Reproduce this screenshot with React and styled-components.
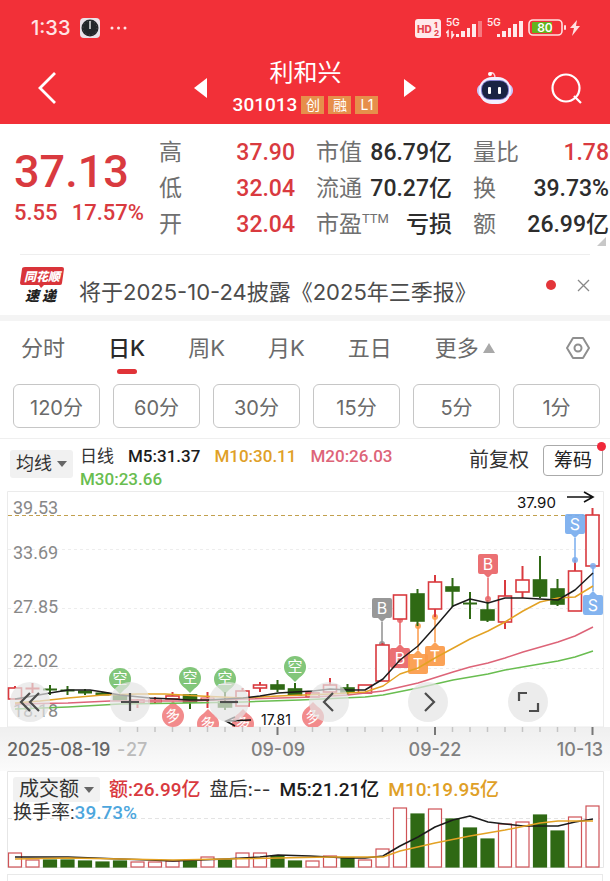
import styled, { createGlobalStyle } from "styled-components";

const RED = "#d93a3f";
const GREEN = "#2f6914";

// candle: [kind, high, top, bottom, low], kind is "r" (up) or "g" (down)
const candles = [
  ["r", 686, 688, 699, 699],
  ["r", 683, 688, 689, 693],
  ["g", 685, 689, 690, 695],
  ["g", 686, 690, 691, 695],
  ["g", 689, 691, 693, 695],
  ["g", 692, 693, 695, 695],
  ["g", 695, 695, 700, 700],
  ["r", 699, 700, 703, 708],
  ["r", 697, 700, 702, 703],
  ["r", 692, 696, 699, 699],
  ["g", 694, 695, 702, 709],
  ["r", 692, 698, 700, 708],
  ["g", 692, 702, 707, 710],
  ["r", 688, 691, 706, 706],
  ["r", 682, 685, 688, 692],
  ["g", 680, 685, 689, 692],
  ["g", 683, 689, 695, 695],
  ["r", 692, 693, 697, 697],
  ["r", 678, 685, 692, 692],
  ["g", 684, 688, 692, 695],
  ["r", 685, 685, 693, 693],
  ["r", 643, 645, 681, 681],
  ["r", 595, 595, 619, 619],
  ["g", 589, 594, 621, 626],
  ["r", 575, 582, 609, 617],
  ["g", 578, 587, 591, 607],
  ["g", 592, 603, 604, 619],
  ["g", 600, 610, 620, 622],
  ["r", 580, 596, 622, 629],
  ["r", 566, 580, 592, 598],
  ["g", 556, 580, 596, 598],
  ["g", 579, 589, 604, 606],
  ["r", 560, 571, 611, 611],
  ["r", 508, 515, 566, 566],
];

const volumes = [
  853, 860, 860, 860, 861, 862, 861, 862, 862, 861, 861, 857, 860, 853, 853,
  856, 861, 861, 856, 858, 860, 849, 808, 814, 809, 819, 828, 839, 824, 822,
  815, 831, 817, 806,
];

const cx = (i) => 15 + i * 17.5;

const priceLines = [
  {
    color: "#69bd50",
    points:
      "15,709 68,707 120,704 190,703 243,702 300,700 365,697 383,695 418,688 453,680 488,674 505,670 540,664 558,661 575,657 593,651",
  },
  {
    color: "#dd6478",
    points:
      "15,704 68,703 110,701 190,701 243,699 313,697 348,695 365,693 383,691 418,683 453,672 470,667 488,663 505,658 523,652 558,642 575,636 593,627",
  },
  {
    color: "#e3a224",
    points:
      "15,703 40,701 68,698 103,695 138,694 165,694 200,696 243,698 278,696 330,694 365,692 383,686 400,674 418,668 435,658 470,639 488,631 505,622 523,611 540,602 558,598 575,597 593,586",
  },
  {
    color: "#1c1c1c",
    points:
      "15,699 33,696 50,693 68,690 90,690 103,692 120,695 150,698 173,699 190,700 208,700 225,699 243,698 260,696 278,693 295,692 313,691 330,689 348,690 365,690 383,679 400,660 418,646 435,627 453,606 470,599 488,603 505,598 523,598 540,599 558,600 575,590 593,573",
  },
];

const volumeLines = [
  {
    color: "#1c1c1c",
    points:
      "15,857 68,857 120,859 150,860 173,861 225,859 260,857 278,855 310,856 348,858 365,858 383,856 400,846 418,837 435,827 453,820 470,816 488,822 505,824 523,826 540,826 558,826 575,822 593,819",
  },
  {
    color: "#e3a224",
    points:
      "15,859 68,858 120,859 173,860 225,859 278,858 330,857 383,857 400,851 435,843 470,836 505,830 540,823 558,821 593,821",
  },
];

const scaleLabels = [
  ["39.53", 514],
  ["33.69", 559],
  ["27.85", 613],
  ["22.02", 667],
  ["18.18", 717],
];

// trade flags: letter, colour, stem start, box centre
const flags = [
  { text: "B", color: "#8f8f8f", x: 382, dot: 644, y: 608 },
  { text: "B", color: "#e96467", x: 400, dot: 620, y: 658 },
  { text: "T", color: "#fb9a48", x: 418, dot: 626, y: 664 },
  { text: "T", color: "#fb9a48", x: 435, dot: 617, y: 656 },
  { text: "B", color: "#e96467", x: 488, dot: 599, y: 564 },
  { text: "S", color: "#78acee", x: 575, dot: 560, y: 524 },
  { text: "S", color: "#78acee", x: 593, dot: 566, y: 605 },
];

const bubbles = [
  { text: "空", x: 120, y: 679 },
  { text: "空", x: 190, y: 678 },
  { text: "空", x: 225, y: 679 },
  { text: "空", x: 295, y: 667 },
  { text: "多", x: 173, y: 716 },
  { text: "多", x: 208, y: 724 },
  { text: "多", x: 243, y: 724 },
  { text: "多", x: 313, y: 717 },
];

const quotes = [
  ["高", "37.90", "red"],
  ["市值", "86.79亿"],
  ["量比", "1.78", "red"],
  ["低", "32.04", "red"],
  ["流通", "70.27亿"],
  ["换", "39.73%"],
  ["开", "32.04", "red"],
  ["市盈", "亏损", "", "TTM"],
  ["额", "26.99亿"],
];

const tabs = ["分时", "日K", "周K", "月K", "五日"];
const periods = ["120分", "60分", "30分", "15分", "5分", "1分"];

const tools = [
  ["最早", "M29 11 L20 20 L29 29 M20 11 L11 20 L20 29"],
  ["放大", "M20 11 V29 M11 20 H29"],
  ["缩小", "M11 20 H29"],
  ["向左", "M24 11 L15 20 L24 29"],
  ["向右", "M17 11 L26 20 L17 29"],
  ["全屏", "M11 19 V11 H19 M30 21 V29 H21"],
];

const Candles = () =>
  candles.map(([kind, high, top, bottom, low], i) => {
    const color = kind === "r" ? RED : GREEN;
    return (
      <g key={i} stroke={color} strokeWidth="2">
        <path d={`M${cx(i)} ${high} V${top} M${cx(i)} ${bottom} V${low}`} />
        <rect
          x={cx(i) - 6.5}
          y={top}
          width="13"
          height={Math.max(bottom - top, 1)}
          strokeWidth={bottom - top < 3 ? 1 : 1.6}
          fill={kind === "r" ? "#fff" : GREEN}
        />
      </g>
    );
  });

const Lines = ({ data }) =>
  data.map(({ color, points }) => (
    <polyline
      key={color}
      points={points}
      fill="none"
      stroke={color}
      strokeWidth="1.5"
      strokeLinejoin="round"
    />
  ));

const Flag = ({ text, color, x, dot, y }) => {
  const below = y > dot;
  const edge = below ? y - 10 : y + 10;
  const tip = below ? edge - 4 : edge + 4;
  return (
    <g fill={color}>
      <line x1={x} x2={x} y1={dot} y2={tip} stroke={color} strokeWidth="1.5" />
      <circle cx={x} cy={dot} r="3" fillOpacity="0.85" />
      <g fillOpacity="0.92">
        <rect x={x - 10} y={y - 10} width="20" height="20" rx="2" />
        <path d={`M${x - 4} ${edge} L${x} ${tip} L${x + 4} ${edge} Z`} />
      </g>
      <FlagText x={x} y={y + 6}>
        {text}
      </FlagText>
    </g>
  );
};

const Bubble = ({ text, x, y }) => {
  const up = text === "多";
  const color = up ? "#f28b8c" : "#82c67a";
  return (
    <g fill={color}>
      <circle cx={x} cy={y} r="11" />
      {up ? (
        <path d={`M${x - 7} ${y - 8} L${x} ${y - 15} L${x + 7} ${y - 8} Z`} />
      ) : (
        <path d={`M${x - 7} ${y + 8} L${x} ${y + 15} L${x + 7} ${y + 8} Z`} />
      )}
      <BubbleText x={x} y={y + 5} transform={`rotate(${up ? -15 : 0} ${x} ${y})`}>
        {text}
      </BubbleText>
    </g>
  );
};

const Signal = ({ dim, data }) => (
  <svg width="36" height="22" viewBox="0 0 36 22" fill="#ffe9ea">
    <Tiny x="0" y="9">
      5G
    </Tiny>
    <rect x="10" y="17" width="3" height="3" />
    <rect x="15" y="14" width="4" height="6" />
    <rect x="21" y="11" width="3" height="9" />
    <rect x="26" y="7" width="4" height="13" />
    <rect x="32" y="4" width="4" height="16" opacity={dim ? 0.4 : 1} />
    {data && (
      <path
        d="M2 20 V14 L0 16 M6 14 V20 L8 17"
        stroke="#ffe9ea"
        strokeWidth="1.5"
        fill="none"
      />
    )}
  </svg>
);

const App = () => {
  return (
    <>
      <GlobalStyle />
      <Page>
        <Header>
          <StatusBar>
            <Clock>1:33</Clock>
            <svg width="20" height="20" viewBox="0 0 20 20">
              <rect width="20" height="20" rx="4" fill="#e9e3ea" />
              <circle cx="10" cy="10" r="8.5" fill="#23272b" />
              <circle
                cx="10"
                cy="10"
                r="7"
                fill="none"
                stroke="#555"
                strokeDasharray="1 2.7"
              />
              <path d="M10 11 V3" stroke="#fff" strokeWidth="1.3" />
            </svg>
            <svg width="17" height="4" viewBox="0 0 17 4" fill="#ffe3e4">
              <circle cx="2" cy="2" r="1.5" />
              <circle cx="8.5" cy="2" r="1.5" />
              <circle cx="15" cy="2" r="1.5" />
            </svg>
            <StatusIcons>
              <svg width="26" height="19" viewBox="0 0 26 19">
                <rect width="26" height="19" rx="3" fill="#ffe9ea" />
                <HdText x="2" y="14">
                  HD
                </HdText>
                <HdSmall x="19" y="9">
                  1
                </HdSmall>
                <HdSmall x="19" y="17">
                  2
                </HdSmall>
              </svg>
              <Signal dim data />
              <Signal />
              <svg width="54" height="18" viewBox="0 0 54 18">
                <rect
                  x="1"
                  y="1"
                  width="33"
                  height="15"
                  rx="4"
                  fill="none"
                  stroke="#ffdfe0"
                  strokeWidth="1.6"
                />
                <rect x="4" y="3" width="20" height="11" rx="1" fill="#62b41d" />
                <rect x="36" y="6" width="2" height="5" rx="1" fill="#ffdfe0" />
                <Battery x="17" y="13">
                  80
                </Battery>
                <path d="M49 1 L42 9 H46 L44 17 L52 7 H48 Z" fill="#ffdfe0" />
              </svg>
            </StatusIcons>
          </StatusBar>
          <TitleBar>
            <IconButton aria-label="返回">
              <svg width="20" height="34" viewBox="0 0 20 34">
                <path
                  d="M18 2 L3 17 L18 32"
                  fill="none"
                  stroke="#fff"
                  strokeWidth="2.8"
                />
              </svg>
            </IconButton>
            <Stock>
              <IconButton aria-label="上一只">
                <svg width="13" height="20" viewBox="0 0 13 20">
                  <path d="M13 0 V20 L0 10 Z" fill="#fff" />
                </svg>
              </IconButton>
              <div>
                <StockName>利和兴</StockName>
                <StockCode>
                  301013
                  <Tag>创</Tag>
                  <Tag>融</Tag>
                  <Tag>L1</Tag>
                </StockCode>
              </div>
              <IconButton aria-label="下一只">
                <svg width="13" height="20" viewBox="0 0 13 20">
                  <path d="M0 1 V19 L12 10 Z" fill="#fff" />
                </svg>
              </IconButton>
            </Stock>
            <Actions>
              <IconButton aria-label="助手">
                <svg width="36" height="34" viewBox="0 0 36 34">
                  <path
                    d="M13 2 Q18 1 18 7"
                    fill="none"
                    stroke="#ffc9d5"
                    strokeWidth="1.5"
                  />
                  <circle cx="13" cy="3" r="2" fill="#fff" />
                  <rect x="0" y="13" width="36" height="13" rx="6" fill="#c9c5fa" />
                  <rect x="2" y="6" width="32" height="27" rx="13" fill="#f3efff" />
                  <rect x="4" y="9" width="28" height="20" rx="9" fill="#8581cf" />
                  <rect x="5" y="10" width="26" height="18" rx="8" fill="#1a2343" />
                  <rect x="11" y="16" width="3" height="7" rx="1" fill="#fff" />
                  <rect x="21" y="16" width="3" height="7" rx="1" fill="#fff" />
                </svg>
              </IconButton>
              <IconButton aria-label="搜索">
                <svg width="32" height="32" viewBox="0 0 32 32">
                  <g fill="none" stroke="#fff" strokeWidth="2.2">
                    <circle cx="16" cy="16" r="13.5" />
                    <path d="M24 24 L31 31" />
                  </g>
                </svg>
              </IconButton>
            </Actions>
          </TitleBar>
        </Header>

        <Quote>
          <Price>
            <strong>37.13</strong>
            <Change>
              <span>5.55</span>
              <span>17.57%</span>
            </Change>
          </Price>
          <Stats>
            {quotes.map(([label, value, tone, sup]) => (
              <Stat key={label} $tone={tone}>
                <dt>
                  {label}
                  {sup && <sup>{sup}</sup>}
                </dt>
                <dd>{value}</dd>
              </Stat>
            ))}
          </Stats>
          <Corner />
        </Quote>

        <News>
          <svg width="44" height="38" viewBox="0 0 44 38">
            <path
              d="M5 1 H42 Q44 1 44 3 L42 17 Q42 19 40 19 H24 L21 22 L19 19 H2 Q0 19 0 17 L2 3 Q2 1 5 1 Z"
              fill="#d9343a"
            />
            <LogoTop x="4" y="15">
              同花顺
            </LogoTop>
            <LogoBottom x="5" y="35">
              速
            </LogoBottom>
            <LogoBottom x="22" y="35">
              递
            </LogoBottom>
          </svg>
          <a href="#news">将于2025-10-24披露《2025年三季报》</a>
          <Dot />
          <IconButton aria-label="关闭">
            <svg width="13" height="13" viewBox="0 0 13 13">
              <path d="M1 1 L12 12 M12 1 L1 12" stroke="#888" strokeWidth="1.3" />
            </svg>
          </IconButton>
        </News>

        <Tabs>
          {tabs.map((tab) => (
            <Tab key={tab} $active={tab === "日K"}>
              {tab}
            </Tab>
          ))}
          <Tab>
            更多
            <svg width="12" height="10" viewBox="0 0 12 10">
              <path d="M6 0 L12 10 H0 Z" fill="#a9a9a9" />
            </svg>
          </Tab>
          <Settings aria-label="设置">
            <svg width="24" height="24" viewBox="0 0 24 24">
              <g fill="none" stroke="#8f8f8f" strokeWidth="2" strokeLinejoin="round">
                <path d="M7 2 H17 L23 12 L17 22 H7 L1 12 Z" />
                <circle cx="12" cy="12" r="3.5" />
              </g>
            </svg>
          </Settings>
        </Tabs>
        <Periods>
          {periods.map((period) => (
            <Period key={period}>{period}</Period>
          ))}
        </Periods>

        <Legend>
          <Picker>
            均线
            <Caret />
          </Picker>
          <Averages>
            <span>日线</span>
            <Value $color="#1c1c1c">M5:31.37</Value>
            <Value $color="#dfa027">M10:30.11</Value>
            <Value $color="#dd6478">M20:26.03</Value>
            <Value $color="#69bd50">M30:23.66</Value>
          </Averages>
          <Adjust>前复权</Adjust>
          <Chips>
            筹码
            <ChipsDot />
          </Chips>
        </Legend>

        <ChartBox>
          <Chart viewBox="0 491 610 280">
            <defs>
              <clipPath id="plot">
                <rect x="0" y="491" width="610" height="236" />
              </clipPath>
              <linearGradient id="axis" x1="0" y1="0" x2="0" y2="1">
                <stop offset="0" stopColor="#efefef" />
                <stop offset="1" stopColor="#fbfbfb" />
              </linearGradient>
            </defs>
            <rect x="0" y="727" width="610" height="44" fill="url(#axis)" />
            <path
              d="M7.5 727 V491.5 H603.5 V727 Z"
              fill="none"
              stroke="#ebebeb"
            />
            <path
              d="M8 549.5 H603 M8 608.5 H603 M8 668.5 H603"
              stroke="#ededed"
              strokeDasharray="3 3"
            />
            <path d="M8 515.5 H603" stroke="#c2a04e" strokeDasharray="4 3" />
            {scaleLabels.map(([label, y]) => (
              <ScaleText key={label} x="13" y={y}>
                {label}
              </ScaleText>
            ))}
            <g clipPath="url(#plot)">
              {flags.slice(0, 4).map((flag) => (
                <Flag key={flag.x} {...flag} />
              ))}
              {bubbles.map((bubble) => (
                <Bubble key={bubble.text + bubble.x} {...bubble} />
              ))}
              <Candles />
              {flags.slice(4).map((flag) => (
                <Flag key={flag.x} {...flag} />
              ))}
              <Lines data={priceLines} />
            </g>
            <g fill="none" stroke="#111" strokeWidth="1.6">
              <path d="M567 497 H593 M584 492 L593 497 L584 502" />
              <path d="M251 720 L226 721 M235 717 L226 721 L235 726" />
            </g>
            <MarkText x="517" y="508">
              37.90
            </MarkText>
            <MarkText x="261" y="725" $small>
              17.81
            </MarkText>
            {candles.slice(6).map((_, n) => {
              const i = n + 6;
              const major = i === 15 || i === 24 || i === 33;
              return (
                <path
                  key={i}
                  d={`M${cx(i)} 727 v${major ? 8 : 5}`}
                  stroke={major ? "#777" : "#c4c4c4"}
                  strokeWidth={major ? 2 : 1.5}
                />
              );
            })}
            <DateText x="126" y="756" $faint>
              27
            </DateText>
            <DateText x="117" y="756" $faint>
              -
            </DateText>
            <DateText x="7" y="756" $dark>
              2025-08-19
            </DateText>
            <DateText x="278" y="756" textAnchor="middle">
              09-09
            </DateText>
            <DateText x="435" y="756" textAnchor="middle">
              09-22
            </DateText>
            <DateText x="603" y="756" textAnchor="end">
              10-13
            </DateText>
          </Chart>
          <Toolbar>
            {tools.map(([label, d]) => (
              <Tool key={label} aria-label={label}>
                <svg width="40" height="40" viewBox="0 0 40 40">
                  <path d={d} fill="none" stroke="#4d4d4d" strokeWidth="2.2" />
                </svg>
              </Tool>
            ))}
          </Toolbar>
        </ChartBox>

        <ChartBox>
          <Chart viewBox="0 771 610 103">
            <rect x="0" y="868" width="610" height="6" fill="#fff" />
            <path
              d="M7.5 867.5 V771.5 H603.5 V867.5 Z"
              fill="none"
              stroke="#e6e6e6"
            />
            <path d="M8 818.5 H603" stroke="#e4e4e4" strokeDasharray="4 3" />
            {volumes.map((top, i) => {
              const up = candles[i][0] === "r";
              return (
                <rect
                  key={i}
                  x={cx(i) - 6.5}
                  y={top}
                  width="13"
                  height={867 - top}
                  fill={up ? "#fff" : GREEN}
                  stroke={up ? "#cf5357" : GREEN}
                  strokeWidth="1.2"
                />
              );
            })}
            <Lines data={volumeLines} />
          </Chart>
          <VolumeLegend>
            <VolumeRow>
              <Picker $compact>
                成交额
                <Caret />
              </Picker>
              <Value $color={RED}>额:26.99亿</Value>
              <AfterHours>盘后:--</AfterHours>
              <Value $color="#1c1c1c">M5:21.21亿</Value>
              <Value $color="#dfa027">M10:19.95亿</Value>
            </VolumeRow>
            <Turnover>
              换手率:<Value $color="#4da6dd">39.73%</Value>
            </Turnover>
          </VolumeLegend>
        </ChartBox>
        <NextPanel />
      </Page>
    </>
  );
};

const GlobalStyle = createGlobalStyle`
  * {
    box-sizing: border-box;
  }

  body {
    margin: 0;
    background: #fff;
    overflow: hidden;
  }

  button {
    font: inherit;
    color: inherit;
    background: none;
    border: 0;
    padding: 0;
    cursor: pointer;
  }

  svg {
    display: block;
    flex: none;
  }
`;

const Page = styled.main`
  font-family: Inter, "Noto Sans CJK SC", sans-serif;
  color: #333;
  white-space: nowrap;
`;

const Header = styled.header`
  background: #f23038;
  color: #fff;
`;

const StatusBar = styled.div`
  display: flex;
  align-items: center;
  gap: 10px;
  height: 56px;
  padding: 0 28px 0 31px;
`;

const Clock = styled.span`
  font-size: 20px;
  font-weight: 500;
  color: #ffe3e4;
`;

const StatusIcons = styled.div`
  display: flex;
  align-items: center;
  gap: 5px;
  margin-left: auto;
`;

const Tiny = styled.text`
  font-size: 10px;
  font-weight: 600;
`;

const HdText = styled.text`
  font-size: 10px;
  font-weight: 800;
  fill: #e5444c;
`;

const HdSmall = styled.text`
  font-size: 8px;
  font-weight: 800;
  fill: #e5444c;
`;

const Battery = styled.text`
  font-size: 12px;
  font-weight: 600;
  fill: #fff;
  text-anchor: middle;
`;

const TitleBar = styled.div`
  display: grid;
  grid-template-columns: 1fr auto 1fr;
  align-items: center;
  height: 68px;
  padding: 0 28px 6px 37px;
`;

const IconButton = styled.button`
  display: flex;
  justify-self: start;
`;

const Stock = styled.div`
  display: flex;
  align-items: center;
  gap: 26px;
  margin-left: -8px;
  text-align: center;
`;

const StockName = styled.h1`
  margin: 0;
  font-size: 24px;
  font-weight: 400;
  line-height: 34px;
`;

const StockCode = styled.div`
  display: flex;
  align-items: center;
  gap: 4px;
  font-family: Roboto, sans-serif;
  font-size: 19px;
  font-weight: 500;
  line-height: 30px;
`;

const Tag = styled.span`
  width: 23px;
  background: #e68f4b;
  font-family: Inter, "Noto Sans CJK SC", sans-serif;
  font-size: 14px;
  font-weight: 400;
  line-height: 18px;
`;

const Actions = styled.div`
  display: flex;
  align-items: center;
  justify-content: flex-end;
  gap: 37px;
`;

const Quote = styled.section`
  position: relative;
  display: flex;
  height: 130px;
  padding: 11px 1px 0 14px;
  font-family: Roboto, "Noto Sans CJK SC", sans-serif;
`;

const Price = styled.div`
  width: 145px;
  padding-top: 13px;
  color: ${RED};

  strong {
    display: block;
    font-size: 45px;
    font-weight: 500;
    line-height: 48px;
  }
`;

const Change = styled.div`
  display: flex;
  gap: 14px;
  font-size: 22px;
  font-weight: 500;
  line-height: 34px;
`;

const Stats = styled.dl`
  flex: 1;
  display: grid;
  grid-template-columns: repeat(3, 1fr);
  column-gap: 21px;
  align-content: start;
  margin: 0;
`;

const Stat = styled.div`
  display: flex;
  justify-content: space-between;
  font-size: 23px;
  line-height: 36px;

  dt {
    color: #707070;
    font-weight: 400;
  }

  dd {
    margin: 0;
    font-weight: 500;
    color: ${({ $tone }) => ($tone === "red" ? RED : "#2d2d2d")};
  }

  sup {
    font-size: 13px;
    line-height: 0;
  }
`;

const Corner = styled.i`
  position: absolute;
  right: 4px;
  bottom: 8px;
  border-left: 9px solid transparent;
  border-bottom: 9px solid #c8c8c8;
`;

const News = styled.section`
  display: flex;
  align-items: center;
  height: 61px;
  margin: 0 20px;
  border-top: 1px solid #eee;

  a {
    margin: 14px auto 0 15px;
    color: #4c4c4c;
    font-size: 22px;
    line-height: 32px;
    text-decoration: none;
  }
`;

const LogoTop = styled.text`
  font-size: 12px;
  font-weight: 800;
  font-style: italic;
  fill: #fff;
`;

const LogoBottom = styled.text`
  font-size: 14px;
  font-weight: 900;
  font-style: italic;
  fill: #222;
`;

const Dot = styled.i`
  width: 10px;
  height: 10px;
  margin-right: 21px;
  border-radius: 50%;
  background: #e3353a;
`;

const Tabs = styled.nav`
  display: flex;
  align-items: center;
  gap: 43px;
  height: 63px;
  padding: 0 20px 3px 21px;
  border-top: 6px solid #f4f4f4;
`;

const Tab = styled.button`
  position: relative;
  display: flex;
  align-items: center;
  gap: 4px;
  font-size: 22px;
  line-height: 48px;
  color: ${({ $active }) => ($active ? "#2a2a2a" : "#6a6a6a")};
  font-weight: ${({ $active }) => ($active ? 500 : 400)};

  &::after {
    content: "";
    display: ${({ $active }) => ($active ? "block" : "none")};
    position: absolute;
    bottom: -2px;
    left: calc(50% - 10px);
    width: 20px;
    height: 5px;
    border-radius: 3px;
    background: #e03338;
  }
`;

const Settings = styled.button`
  margin-left: auto;
`;

const Periods = styled.div`
  display: grid;
  grid-template-columns: repeat(6, 1fr);
  gap: 13px;
  padding: 6px 10px 10px 13px;
  border-bottom: 1px solid #efefef;
`;

const Period = styled.button`
  height: 44px;
  border: 1px solid #c6c6c6;
  border-radius: 6px;
  color: #6a6a6a;
  font-size: 20px;
`;

const Legend = styled.section`
  display: flex;
  align-items: flex-start;
  height: 52px;
  padding: 6px 7px 0 10px;
  font-family: Roboto, "Noto Sans CJK SC", sans-serif;
`;

const Picker = styled.button`
  display: flex;
  align-items: center;
  gap: 5px;
  margin-top: ${({ $compact }) => ($compact ? 0 : 5)}px;
  padding: 0 6px;
  border-radius: 3px;
  background: #f1f1f1;
  font-size: ${({ $compact }) => ($compact ? 20 : 18)}px;
  line-height: ${({ $compact }) => ($compact ? 25 : 28)}px;
`;

const Caret = styled.i`
  border: 5px solid transparent;
  border-top: 6px solid #666;
  border-bottom: 0;
`;

const Averages = styled.div`
  flex: 1;
  display: flex;
  flex-wrap: wrap;
  column-gap: 14px;
  margin-left: 7px;
  font-size: 17px;
  line-height: 23px;
`;

const Value = styled.span`
  color: ${({ $color }) => $color};
  font-weight: 500;
`;

const Adjust = styled.button`
  margin-right: 14px;
  font-size: 20px;
  line-height: 31px;
`;

const Chips = styled.button`
  position: relative;
  width: 60px;
  border: 1px solid #aaa;
  border-radius: 4px;
  color: #222;
  font-size: 19px;
  line-height: 29px;
`;

const ChipsDot = styled.i`
  position: absolute;
  top: -4px;
  right: -4px;
  width: 9px;
  height: 9px;
  border-radius: 50%;
  background: #f0283a;
`;

const ChartBox = styled.section`
  position: relative;
`;

const Chart = styled.svg`
  width: 100%;
`;

const ScaleText = styled.text`
  font-family: Roboto, sans-serif;
  font-size: 18px;
  fill: #888;
`;

const FlagText = styled.text`
  font-size: 16px;
  fill: #fff;
  text-anchor: middle;
`;

const BubbleText = styled.text`
  font-size: 15px;
  fill: #fff;
  text-anchor: middle;
`;

const MarkText = styled.text`
  font-family: Inter, sans-serif;
  font-size: ${({ $small }) => ($small ? 14 : 15)}px;
  fill: #111;
`;

const DateText = styled.text`
  font-size: 18px;
  font-weight: 500;
  fill: ${({ $dark, $faint }) => ($faint ? "#bbb" : $dark ? "#666" : "#808080")};
`;

const Toolbar = styled.div`
  position: absolute;
  left: 10px;
  right: 62px;
  bottom: 49px;
  display: flex;
  justify-content: space-between;
`;

const Tool = styled.button`
  border-radius: 50%;
  background: rgba(228, 228, 228, 0.7);
`;

const VolumeLegend = styled.div`
  position: absolute;
  top: 6px;
  left: 13px;
  font-family: Roboto, "Noto Sans CJK SC", sans-serif;
  font-size: 19px;
  line-height: 25px;
`;

const VolumeRow = styled.div`
  display: flex;
  gap: 9px;
`;

const AfterHours = styled.span`
  font-family: Inter, "Noto Sans CJK SC", sans-serif;
`;

const Turnover = styled.div`
  font-size: 19px;
  line-height: 22px;
`;

const NextPanel = styled.section`
  height: 7px;
  margin: 0 7px;
  border: 1px solid #e9e9e9;
  border-bottom: 0;
`;

export default App;
